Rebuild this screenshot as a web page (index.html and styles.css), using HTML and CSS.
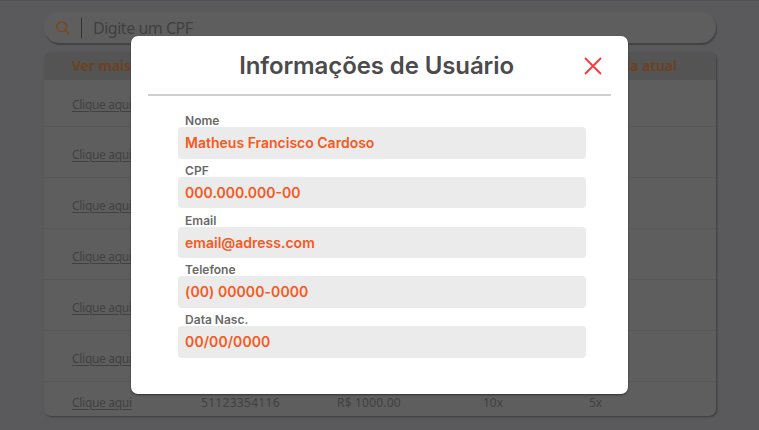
FILE: index.html
```
<!DOCTYPE html>
<html lang="pt-BR">
<head>
<meta charset="utf-8">
<title>Informações de Usuário</title>
<link rel="stylesheet" href="styles.css">
</head>
<body>
<main class="page">
  <div class="search">
    <svg class="search-icon" viewBox="0 0 14 14"><circle cx="5.7" cy="5.7" r="4.9"/><path d="M9.3 9.3 13.3 13.2"/></svg>
    <span class="search-divider"></span>
    <span class="search-text">Digite um CPF</span>
  </div>
  <div class="table">
    <div class="thead"><span>Ver mais</span><span class="last">Parcela atual</span></div>
    <div class="row first"><a>Clique aqui</a></div>
    <div class="row"><a>Clique aqui</a></div>
    <div class="row"><a>Clique aqui</a></div>
    <div class="row"><a>Clique aqui</a></div>
    <div class="row"><a>Clique aqui</a></div>
    <div class="row"><a>Clique aqui</a></div>
    <div class="row end"><a>Clique aqui</a><span class="doc">51123354116</span><span class="value">R$ 1000.00</span><span>10x</span><span>5x</span></div>
  </div>
</main>
<section class="modal">
  <header class="modal-head">
    <h1>Informações de Usuário</h1>
    <svg class="close" viewBox="0 0 18 18"><path d="M1 1 17 17M17 1 1 17"/></svg>
  </header>
  <div class="fields">
    <div class="field"><label>Nome</label><div class="box">Matheus Francisco Cardoso</div></div>
    <div class="field"><label>CPF</label><div class="box">000.000.000-00</div></div>
    <div class="field"><label>Email</label><div class="box">email@adress.com</div></div>
    <div class="field"><label>Telefone</label><div class="box wide">(00) 00000-0000</div></div>
    <div class="field"><label>Data Nasc.</label><div class="box wide">00/00/0000</div></div>
  </div>
</section>
</body>
</html>
```
FILE: styles.css
```
* { box-sizing: border-box; }
body {
  margin: 0;
  height: 430px;
  overflow: hidden;
  background: #5a5a5c;
  border-top: 1px solid #505052;
  font-family: "Noto Sans", "Open Sans", sans-serif;
}
.page { padding: 11px 43px 0 44px; }
.search {
  display: flex;
  align-items: center;
  height: 31px;
  padding-left: 12px;
  border-radius: 16px;
  background: #5e5e5e;
  box-shadow: 1px 2px 1px #434344;
}
.search-icon { width: 14px; height: 14px; fill: none; stroke: #7c4514; stroke-width: 1.3; }
.search-divider { width: 1px; height: 20px; margin: 0 11px; background: #333; }
.search-text { font-size: 16px; color: #404040; letter-spacing: -0.48px; }
.table {
  height: 364px;
  margin-top: 9px;
  border-radius: 7px;
  overflow: hidden;
  background: #5e5e5e;
  box-shadow: 1px 1px 2px #3c3c3d;
}
.thead {
  display: flex;
  justify-content: space-between;
  height: 28px;
  padding: 0 39px 0 28px;
  background: #545454;
  color: #6e401c;
  font-size: 14px;
  font-weight: 600;
  line-height: 28px;
}
.row {
  display: grid;
  grid-template-columns: 129px 136px 146px 106px 1fr;
  height: 51px;
  padding: 20px 0 0 28px;
  border-bottom: 1px solid #585858;
  color: #414141;
  font-size: 12px;
  line-height: 16px;
}
.row a { justify-self: start; letter-spacing: -0.3px; text-decoration: underline; text-underline-offset: 2px; }
.first { height: 47px; padding-top: 17px; }
.end { padding-top: 13px; border: 0; }
.doc { letter-spacing: 0.3px; }
.value { letter-spacing: 0.2px; }
.modal {
  position: absolute;
  top: 36px;
  left: 131.4px;
  width: 496.6px;
  height: 358px;
  padding: 0 17px;
  border-radius: 7px;
  background: #fff;
  box-shadow: 0 1px 2px #333;
  font-family: Inter, sans-serif;
}
.modal-head {
  display: flex;
  align-items: center;
  justify-content: flex-end;
  height: 60px;
  padding: 1px 8.5px 0 0;
  border-bottom: 2px solid #d0d0d0;
}
h1 {
  margin: 0 70.5px 0 0;
  color: #4b4b4b;
  font-size: 24px;
  font-weight: 600;
  letter-spacing: -0.1px;
  line-height: 30px;
  white-space: nowrap;
}
.close { width: 18px; height: 18px; fill: none; stroke: #ff3535; stroke-width: 1.8; }
.fields { padding: 17px 25px 0 30px; }
.field { height: 49.8px; }
label {
  display: block;
  height: 14px;
  padding-left: 6.7px;
  color: #696969;
  font-size: 12px;
  font-weight: 600;
  line-height: 15px;
}
.box {
  height: 31.7px;
  padding-left: 6.7px;
  border-radius: 4px;
  background: #ebebeb;
  color: #f8581b;
  font-size: 14px;
  font-weight: 600;
  line-height: 31px;
}
.wide { letter-spacing: 0.08px; }
```
